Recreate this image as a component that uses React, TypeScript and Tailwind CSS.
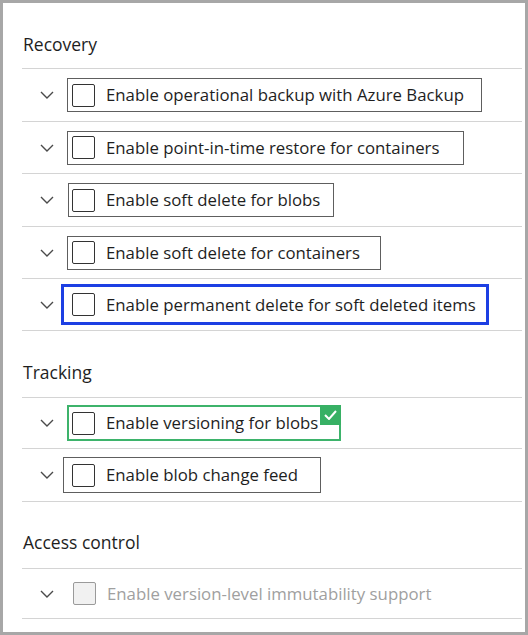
import { ReactNode } from "react";

type Row = {
  label: string;
  h: string;
  box: string;
  disabled?: boolean;
  badge?: boolean;
};

const recovery: Row[] = [
  {
    label: "Enable operational backup with Azure Backup",
    h: "h-[53px]",
    box: "ml-0 w-[415px] h-[34px] border border-[#5e5e5e] pl-[4px]",
  },
  {
    label: "Enable point-in-time restore for containers",
    h: "h-[52px]",
    box: "ml-0 w-[397px] h-[34px] border border-[#5e5e5e] pl-[4px]",
  },
  {
    label: "Enable soft delete for blobs",
    h: "h-[53px]",
    box: "ml-[1px] w-[266px] h-[34px] border border-[#5e5e5e] pl-[3px]",
  },
  {
    label: "Enable soft delete for containers",
    h: "h-[52px]",
    box: "ml-0 w-[314px] h-[34px] border border-[#5e5e5e] pl-[4px]",
  },
  {
    label: "Enable permanent delete for soft deleted items",
    h: "h-[52px]",
    box: "-ml-[6px] w-[428px] h-[41px] border-[3px] border-[#1d3fe3] pl-[8px]",
  },
];

const tracking: Row[] = [
  {
    label: "Enable versioning for blobs",
    h: "h-[51px]",
    box: "ml-0 w-[274px] h-[36px] border-2 border-[#3db36b] pl-[3px]",
    badge: true,
  },
  {
    label: "Enable blob change feed",
    h: "h-[53px]",
    box: "-ml-[4px] w-[258px] h-[36px] border border-[#5e5e5e] pl-[8px]",
  },
];

const access: Row[] = [
  {
    label: "Enable version-level immutability support",
    h: "h-[50px]",
    box: "ml-0 pl-[5px] border border-transparent",
    disabled: true,
  },
];

function Chevron() {
  return (
    <svg width="14" height="8" viewBox="0 0 14 8" fill="none">
      <path d="M1 1l6 6 6-6" stroke="#4a4a4a" strokeWidth="1.4" />
    </svg>
  );
}

function Badge() {
  return (
    <div className="absolute -right-[2px] -top-[2px] flex h-[20px] w-[21px] items-center justify-center bg-[#37b064]">
      <svg width="13" height="10" viewBox="0 0 13 10" fill="none">
        <path d="M1 5l4 4 7-8" stroke="white" strokeWidth="2" />
      </svg>
    </div>
  );
}

function SettingRow({ row }: { row: Row }) {
  return (
    <div className={`flex items-center border-t border-[#d4d4d4] ${row.h}`}>
      <div className="flex w-[45px] shrink-0 justify-center pl-[4px]">
        <Chevron />
      </div>
      <div className={`relative flex shrink-0 items-center gap-[11px] ${row.box}`}>
        <div
          className={
            row.disabled
              ? "h-[23px] w-[23px] rounded-[2px] border border-[#9a9a9a] bg-[#f1f1f1]"
              : "h-[23px] w-[23px] rounded-[2px] border border-[#333]"
          }
        />
        <span
          className={
            row.disabled
              ? "whitespace-nowrap text-[16.8px] text-[#a0a0a0]"
              : "whitespace-nowrap text-[16.8px] text-[#1e1e1e]"
          }
        >
          {row.label}
        </span>
        {row.badge && <Badge />}
      </div>
    </div>
  );
}

function Heading({ children, h }: { children: ReactNode; h: string }) {
  return (
    <div className={`flex items-end pl-[1px] ${h}`}>
      <span className="text-[17.5px] leading-[24px] text-[#1e1e1e]">{children}</span>
    </div>
  );
}

export default function App() {
  return (
    <div
      className="h-[635px] w-[528px] overflow-hidden border-[3px] border-[#a7a7a7] bg-white pl-[19px] pr-[3px]"
      style={{ fontFamily: '"Open Sans", "Noto Sans", sans-serif' }}
    >
      <Heading h="h-[65px] pb-[12px]">Recovery</Heading>
      {recovery.map((r) => (
        <SettingRow key={r.label} row={r} />
      ))}
      <div className="border-t border-[#d4d4d4]" />
      <Heading h="h-[66px] pb-[13px]">Tracking</Heading>
      {tracking.map((r) => (
        <SettingRow key={r.label} row={r} />
      ))}
      <div className="border-t border-[#d4d4d4]" />
      <Heading h="h-[66px] pb-[14px]">Access control</Heading>
      {access.map((r) => (
        <SettingRow key={r.label} row={r} />
      ))}
      <div className="border-t border-[#d4d4d4]" />
    </div>
  );
}
